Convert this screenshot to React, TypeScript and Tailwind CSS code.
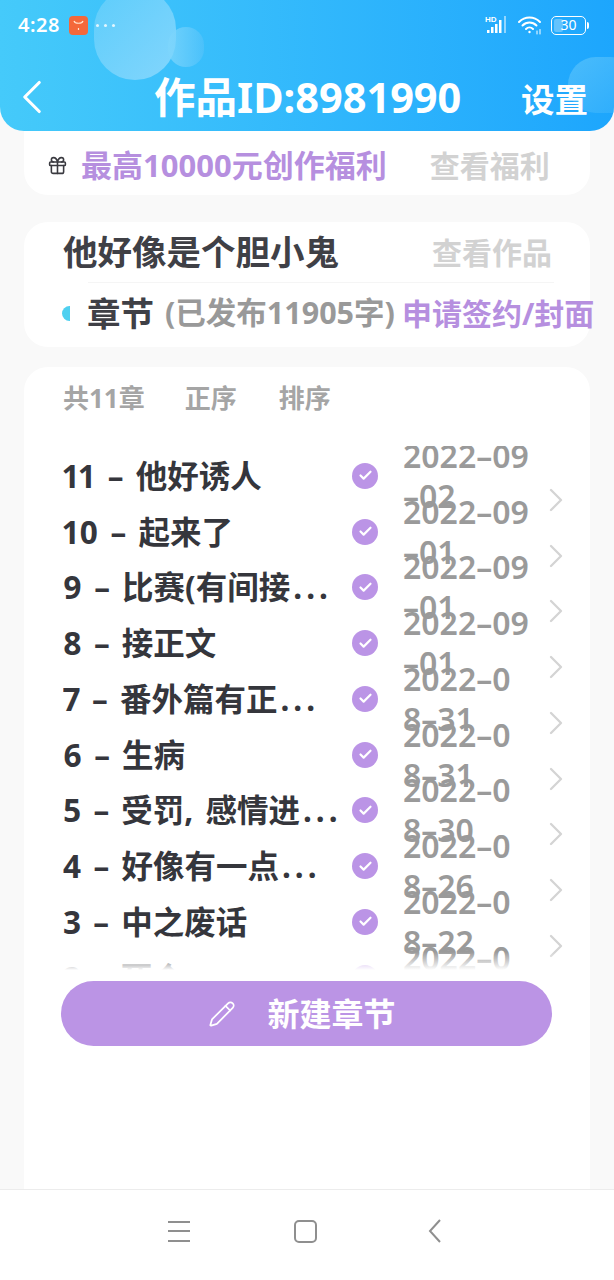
import React from 'react';
import { ChevronLeft, ChevronRight, Gift, Pencil, Check } from 'lucide-react';

const chapters = [
  { title: '11 – 他好诱人', date: ['2022–09', '–02'] },
  { title: '10 – 起来了', date: ['2022–09', '–01'] },
  { title: '9 – 比赛(有间接', more: true, date: ['2022–09', '–01'] },
  { title: '8 – 接正文', date: ['2022–09', '–01'] },
  { title: '7 – 番外篇有正', more: true, date: ['2022–0', '8–31'] },
  { title: '6 – 生病', date: ['2022–0', '8–31'] },
  { title: '5 – 受罚, 感情进', more: true, date: ['2022–0', '8–30'] },
  { title: '4 – 好像有一点', more: true, date: ['2022–0', '8–26'] },
  { title: '3 – 中之废话', date: ['2022–0', '8–22'] },
  { title: '2 – 死个', date: ['2022–0', '8–20'] }
];

function StatusBar() {
  return (
    <div className="flex h-[50px] items-center justify-between pl-[18px] pr-[25px] text-white">
      <div className="flex items-center">
        <span className="text-[20px] font-semibold tracking-[0.5px]">4:28</span>
        <div className="ml-[9px] flex h-[19px] w-[19px] items-center justify-center rounded-[4px] bg-[#f4683a]">
          <svg width="13" height="13" viewBox="0 0 13 13" fill="none" stroke="#ffe5cf" strokeWidth="1.2">
            <path d="M2 2c1 3 8 3 9 0" />
            <path d="M6.5 9v2" />
          </svg>
        </div>
        <span className="ml-[8px] flex gap-[5px]">
          <i className="h-[3px] w-[3px] rounded-full bg-white/80" />
          <i className="h-[3px] w-[3px] rounded-full bg-white/80" />
          <i className="h-[3px] w-[3px] rounded-full bg-white/80" />
        </span>
      </div>
      <div className="flex items-center gap-[8px]">
        <svg width="24" height="20" viewBox="0 0 24 20" fill="white">
          <text x="0" y="7" fontSize="8" fontWeight="700" fontFamily="'Liberation Sans', sans-serif">HD</text>
          <rect x="2" y="15" width="2.5" height="3" />
          <rect x="6" y="12" width="2.5" height="6" />
          <rect x="10" y="9" width="2.5" height="9" />
          <rect x="14" y="5" width="2.5" height="13" />
          <rect x="19" y="1" width="2" height="17" opacity="0.5" />
        </svg>
        <svg width="26" height="20" viewBox="0 0 26 20" fill="none" stroke="white" strokeWidth="2" strokeLinecap="round">
          <path d="M2 7c6-6 15-6 21 0" />
          <path d="M5.5 10.5c4-4 10-4 14 0" />
          <path d="M9 14c2-2 5-2 7 0" />
          <circle cx="12.5" cy="17" r="1.2" fill="white" stroke="none" />
          <path d="M20 16v3M23 14.5v4.5" strokeWidth="1" />
        </svg>
        <div className="flex items-center">
          <div className="relative flex h-[19px] w-[35px] items-center justify-center rounded-[5px] border-[1.5px] border-white">
            <div className="absolute inset-y-[2px] left-[2px] w-[9px] rounded-[2px] bg-white/30" />
            <span className="relative text-[14px] leading-none text-white">30</span>
          </div>
          <div className="ml-[1px] h-[7px] w-[2px] rounded-r bg-white" />
        </div>
      </div>
    </div>
  );
}

function Header() {
  return (
    <header className="relative h-[131px] shrink-0 overflow-hidden rounded-b-[24px] bg-gradient-to-r from-[#45cafa] to-[#1da6fd]">
      <div className="absolute left-[94px] top-[-12px] h-[92px] w-[82px] rounded-full bg-gradient-to-br from-[#6fd2fb]/70 to-[#8ad8fd] opacity-90" />
      <div className="absolute left-[168px] top-[27px] h-[40px] w-[36px] rounded-full bg-gradient-to-r from-[#7ed6fc]/80 to-[#5cc4fa]/50" />
      <div className="absolute left-[568px] top-[57px] h-[56px] w-[70px] rounded-full bg-gradient-to-br from-[#5cc4fb]/70 to-[#3cb4fb]/40" />
      <div className="relative">
        <StatusBar />
        <div className="relative h-[81px]">
          <ChevronLeft className="absolute left-[3px] top-[18px] text-white" size={58} strokeWidth={1.3} />
          <div className="absolute left-[154px] top-[18px] whitespace-nowrap text-[41.5px] font-bold leading-[58px] text-white">作品ID:8981990</div>
          <div className="absolute left-[521px] top-[24px] whitespace-nowrap text-[33.5px] font-bold leading-[50px] text-white">设置</div>
        </div>
      </div>
    </header>
  );
}

function Row({ title, more, date }: { title: string; more?: boolean; date: string[] }) {
  return (
    <div className="flex h-[55.75px] shrink-0 items-center">
      <div className="w-[289px] whitespace-nowrap text-[31.5px] font-bold leading-[42px] text-[#35363c] proportional-nums [word-spacing:4px]">
        {title}
        {more && <span className="ml-[3px] tracking-[4px]">...</span>}
      </div>
      <div className="flex h-[26px] w-[26px] items-center justify-center rounded-full bg-[#bb94e6]">
        <Check className="text-white" size={15} strokeWidth={3.5} />
      </div>
      <div className="ml-[25px] flex w-[133px] flex-col text-[32px] font-semibold leading-[40px] text-[#9a9a9a]">
        <span className="whitespace-nowrap">{date[0]}</span>
        <span className="whitespace-nowrap">{date[1]}</span>
      </div>
      <ChevronRight className="mt-[48px] shrink-0 text-[#d4d4d4]" size={40} strokeWidth={1.4} />
    </div>
  );
}

export default function App() {
  return (
    <div
      className="flex h-[1280px] w-[614px] flex-col overflow-hidden bg-[#f9f9f9]"
      style={{ fontFamily: "'Noto Sans', 'Noto Sans CJK SC', sans-serif" }}
    >
      <Header />

      <div className="flex min-h-0 flex-1 flex-col px-[24px]">
        <section className="flex h-[64px] shrink-0 items-center rounded-b-[24px] bg-white pt-[4px] pl-[23px]">
          <Gift className="text-[#3a3a40]" size={21} strokeWidth={1.8} />
          <span className="ml-[13px] whitespace-nowrap text-[31px] font-bold text-[#b68fdf]">最高10000元创作福利</span>
          <span className="ml-[43px] whitespace-nowrap text-[30px] font-bold text-[#d2d2d2]">查看福利</span>
        </section>

        <section className="mt-[27px] h-[125px] shrink-0 rounded-[24px] bg-white">
          <div className="flex h-[60px] items-center pl-[39px]">
            <span className="whitespace-nowrap text-[34.5px] font-bold text-[#3f4046]">他好像是个胆小鬼</span>
            <span className="ml-[93px] whitespace-nowrap text-[30px] font-bold text-[#d2d2d2]">查看作品</span>
          </div>
          <div className="ml-[64px] mr-[36px] h-px bg-[#f5f5f5]" />
          <div className="flex h-[60px] items-center">
            <div className="ml-[38px] h-[15px] w-[8px] shrink-0 rounded-l-full bg-[#4fd0f0]" />
            <span className="ml-[17px] whitespace-nowrap text-[33.5px] font-bold text-[#3f4046]">章节</span>
            <span className="ml-[11px] whitespace-nowrap text-[30.5px] font-bold text-[#999999]">(已发布11905字)</span>
            <span className="ml-[7px] whitespace-nowrap text-[30px] font-bold text-[#b68fdf]">申请签约/封面</span>
          </div>
        </section>

        <section className="relative mt-[20px] min-h-0 flex-1 rounded-t-[24px] bg-white pl-[39px]">
          <div className="flex h-[62px] items-center text-[26px] font-bold text-[#a5a5a5]">
            <span>共11章</span>
            <span className="ml-[40px]">正序</span>
            <span className="ml-[42px]">排序</span>
          </div>
          <div className="relative mt-[17px] flex h-[524px] flex-col overflow-hidden">
            <div className="h-[2px] shrink-0" />
            {chapters.map((c) => (
              <Row key={c.title} title={c.title} more={c.more} date={c.date} />
            ))}
            <div className="absolute inset-x-0 bottom-0 h-[18px] bg-gradient-to-b from-white/0 to-white" />
          </div>
          <button className="-ml-[2px] mt-[11px] flex h-[65px] w-[491px] items-center justify-center rounded-full bg-[#bb94e5] pr-[9px] text-white">
            <Pencil size={28} strokeWidth={1.5} />
            <span className="ml-[31px] text-[32px] font-bold">新建章节</span>
          </button>
        </section>
      </div>

      <nav className="flex h-[91px] shrink-0 items-center border-t border-[#ececec] bg-white pb-[8px]">
        <div className="ml-[168px] flex w-[22px] flex-col gap-[7.5px]">
          <i className="h-[2px] bg-[#8f8f8f]" />
          <i className="h-[2px] bg-[#8f8f8f]" />
          <i className="h-[2px] bg-[#8f8f8f]" />
        </div>
        <div className="ml-[104px] h-[23px] w-[23px] rounded-[5px] border-2 border-[#8f8f8f]" />
        <svg className="ml-[111px]" width="14" height="26" viewBox="0 0 14 26" fill="none" stroke="#8f8f8f" strokeWidth="2">
          <path d="M12 2 2 13l10 11" />
        </svg>
      </nav>
    </div>
  );
}
